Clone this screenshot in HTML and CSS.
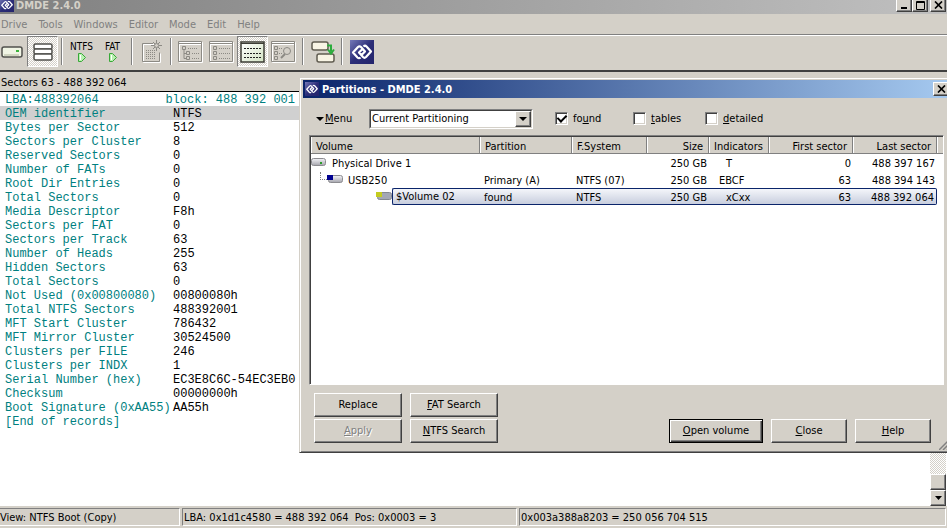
FILE: index.html
```html
<!DOCTYPE html>
<html lang="en">
<head>
    <meta charset="UTF-8">
    <meta name="viewport" content="width=device-width, initial-scale=1.0">
    <title>DMDE 2.4.0</title>
    <link rel="stylesheet" href="styles.css">
</head>
<body>
    <!-- Shared icons -->
    <svg class="defs" width="0" height="0" aria-hidden="true">
        <defs>
            <linearGradient id="logoFill" x1="0" y1="0" x2="1" y2="1">
                <stop offset="0" stop-color="#7478b8"/>
                <stop offset="0.5" stop-color="#2c2e78"/>
                <stop offset="1" stop-color="#24246c"/>
            </linearGradient>
            <linearGradient id="gridFill" x1="0" y1="0" x2="1" y2="1">
                <stop offset="0" stop-color="#ffffff"/>
                <stop offset="1" stop-color="#d4e4c4"/>
            </linearGradient>
            <linearGradient id="driveFill" x1="0" y1="0" x2="0" y2="1">
                <stop offset="0" stop-color="#f4f4f8"/>
                <stop offset="1" stop-color="#a4a4ac"/>
            </linearGradient>
        </defs>
        <symbol id="logo" viewBox="0 0 24 24">
            <rect width="24" height="24" fill="url(#logoFill)"/>
            <path d="M10.500 17.500 Q9 19 7.500 17.500 L3 12.500 L8 7 Q9.500 5.500 11 7 L15 11.500 L11.500 15 M13.500 6.500 Q15 5 16.500 6.500 L21 11.500 L16 17 Q14.500 18.500 13 17 L9 12.500 L12.500 9" fill="none" stroke="#fff" stroke-width="2.200" stroke-linejoin="round"/>
        </symbol>
        <symbol id="play" viewBox="0 0 10 9">
            <path d="M1.500 0.500h3l4 4-4 4h-3z" fill="#b8f0b0" stroke="#38a838"/>
            <path d="M3.500 2v5" stroke="#fff"/>
        </symbol>
        <symbol id="close" viewBox="0 0 9 8">
            <path d="M1 0.500l7 7M8 0.500l-7 7" stroke="#000" stroke-width="1.700"/>
        </symbol>
    </svg>

    <div class="window">
        <header class="titlebar main-title">
            <svg class="title-icon"><use href="#logo"/></svg>
            <h1>DMDE 2.4.0</h1>
            <button class="win-btn" aria-label="Minimize"><svg width="9" height="8"><path d="M1 7h6" stroke="#000" stroke-width="2"/></svg></button>
            <button class="win-btn" aria-label="Maximize"><svg width="9" height="9"><path d="M0.500 0.500h8v8h-8zM0 1.500h9" fill="none" stroke="#000"/></svg></button>
            <button class="win-btn gap" aria-label="Close"><svg width="9" height="8"><use href="#close"/></svg></button>
        </header>

        <nav class="menubar">
            <a href="#">Drive</a>
            <a href="#">Tools</a>
            <a href="#">Windows</a>
            <a href="#">Editor</a>
            <a href="#">Mode</a>
            <a href="#">Edit</a>
            <a href="#">Help</a>
        </nav>

        <div class="toolbar">
            <button class="tool" aria-label="Select drive">
                <svg width="22" height="12"><rect x="1" y="1" width="20" height="10" rx="2" fill="#f0f4e4" stroke="#50504c" stroke-width="1.500"/><path d="M3 9h15" stroke="#d0d4c0" stroke-width="2"/><path d="M15 5h3" stroke="#3cb43c" stroke-width="2"/></svg>
            </button>
            <button class="tool pressed" aria-label="Partitions">
                <svg width="20" height="18"><g fill="#fff" stroke="#50504c" stroke-width="1.500"><rect x="1" y="1" width="18" height="5" rx="1.500"/><rect x="1" y="6" width="18" height="5" rx="1.500"/><rect x="1" y="11" width="18" height="6" rx="1.500"/></g></svg>
            </button>
            <span class="sep"></span>
            <button class="tool search">NTFS<svg width="10" height="9"><use href="#play"/></svg></button>
            <button class="tool search">FAT<svg width="10" height="9"><use href="#play"/></svg></button>
            <span class="sep"></span>
            <button class="tool" aria-label="New" disabled>
                <svg width="22" height="24"><g fill="none" stroke="#fff" transform="translate(1 1)"><path d="M12 3.500H1.500v18h17v-9"/></g><g fill="none" stroke="#8c8a84"><path d="M12 3.500H1.500v18h17v-9"/><path d="M15.500 0v3M15.500 8v3M10 5.500h3M18 5.500h3M12 2l2 2M19 2l-2 2M12 9l2-2M19 9l-2-2"/><circle cx="15.500" cy="5.500" r="2"/><path d="M5 10.500h10M5 12.500h10M5 14.500h10M5 16.500h10M5 18.500h10" stroke-dasharray="1 1"/></g></svg>
            </button>
            <span class="sep"></span>
            <button class="tool" aria-label="Tree view" disabled>
                <svg width="25" height="22"><path d="M1.500 1.500h23v20h-23zM2 3.500h22" fill="none" stroke="#fff"/><g fill="none" stroke="#8c8a84"><path d="M0.500 0.500h23v20h-23zM1 2.500h22"/><path d="M4.500 5.500h3v3h-3zM8.500 10.500h3v3h-3zM8.500 15.500h3v3h-3zM6 9v8.500h2M6 12.500h2"/><path d="M10 7.500h10M14 12.500h7M14 17.500h7" stroke-dasharray="1 1"/></g></svg>
            </button>
            <button class="tool" aria-label="List view" disabled>
                <svg width="25" height="22"><path d="M1.500 1.500h23v20h-23zM2 3.500h22" fill="none" stroke="#fff"/><g fill="none" stroke="#8c8a84"><path d="M0.500 0.500h23v20h-23zM1 2.500h22"/><path d="M4.500 5.500h3v3h-3zM4.500 10.500h3v3h-3zM4.500 15.500h3v3h-3z"/><path d="M10 7.500h11M10 12.500h11M10 17.500h11" stroke-dasharray="1 1"/></g></svg>
            </button>
            <button class="tool pressed" aria-label="Record view">
                <svg width="25" height="22"><rect x="1" y="1" width="23" height="20" fill="url(#gridFill)" stroke="#3c3c34" stroke-width="1.500"/><path d="M1 2.500h23" stroke="#3c3c34"/><path d="M4 7.500h17M4 12.500h17M4 16.500h17" stroke="#202020" stroke-dasharray="2 1"/></svg>
            </button>
            <button class="tool" aria-label="Find" disabled>
                <svg width="25" height="22"><path d="M1.500 1.500h23v20h-23zM2 3.500h22" fill="none" stroke="#fff"/><g fill="none" stroke="#8c8a84"><path d="M0.500 0.500h23v20h-23zM1 2.500h22"/><path d="M3.500 5.500h3v3h-3zM3.500 10.500h3v3h-3zM3.500 15.500h3v3h-3z"/><circle cx="16" cy="10" r="3.500"/><path d="M14 13l-4 4" stroke-width="2"/><path d="M8 7.500h4M8 12.500h3" stroke-dasharray="1 1"/></g></svg>
            </button>
            <span class="sep"></span>
            <button class="tool" aria-label="Copy sectors">
                <svg width="24" height="24"><g fill="#f8f4e4" stroke="#605c50" stroke-width="1.500"><rect x="1" y="2" width="16" height="8" rx="2"/><rect x="6" y="14" width="17" height="8" rx="2"/></g><path d="M16 5.500h4v6M17 9.500l3 4 3-4" fill="none" stroke="#2cac3c" stroke-width="2"/></svg>
            </button>
            <span class="sep"></span>
            <button class="tool" aria-label="About">
                <svg width="24" height="24"><use href="#logo"/></svg>
            </button>
        </div>

        <div class="pane-title">Sectors 63 - 488 392 064</div>

        <main class="editor">
            <div class="records">
                <div class="position"><span>LBA:488392064</span><span>block: 488 392 001</span></div>
                <table>
                    <tr class="current"><th>OEM identifier</th><td>NTFS</td></tr>
                    <tr><th>Bytes per Sector</th><td>512</td></tr>
                    <tr><th>Sectors per Cluster</th><td>8</td></tr>
                    <tr><th>Reserved Sectors</th><td>0</td></tr>
                    <tr><th>Number of FATs</th><td>0</td></tr>
                    <tr><th>Root Dir Entries</th><td>0</td></tr>
                    <tr><th>Total Sectors</th><td>0</td></tr>
                    <tr><th>Media Descriptor</th><td>F8h</td></tr>
                    <tr><th>Sectors per FAT</th><td>0</td></tr>
                    <tr><th>Sectors per Track</th><td>63</td></tr>
                    <tr><th>Number of Heads</th><td>255</td></tr>
                    <tr><th>Hidden Sectors</th><td>63</td></tr>
                    <tr><th>Total Sectors</th><td>0</td></tr>
                    <tr><th>Not Used (0x00800080)</th><td>00800080h</td></tr>
                    <tr><th>Total NTFS Sectors</th><td>488392001</td></tr>
                    <tr><th>MFT Start Cluster</th><td>786432</td></tr>
                    <tr><th>MFT Mirror Cluster</th><td>30524500</td></tr>
                    <tr><th>Clusters per FILE</th><td>246</td></tr>
                    <tr><th>Clusters per INDX</th><td>1</td></tr>
                    <tr><th>Serial Number (hex)</th><td>EC3E8C6C-54EC3EB0</td></tr>
                    <tr><th>Checksum</th><td>00000000h</td></tr>
                    <tr><th>Boot Signature (0xAA55)</th><td>AA55h</td></tr>
                    <tr><th>[End of records]</th><td></td></tr>
                </table>
            </div>
            <div class="scrollbar">
                <div class="thumb"></div>
                <button class="scroll-btn" aria-label="Scroll down"><svg width="7" height="4"><path d="M0 0h7L3.500 4z"/></svg></button>
            </div>
        </main>

        <footer class="statusbar">
            <div class="status-view">View: NTFS Boot (Copy)</div>
            <div class="status-lba">LBA: 0x1d1c4580 = 488 392 064&nbsp; Pos: 0x0003 = 3</div>
            <div class="status-offset">0x003a388a8203 = 250 056 704 515</div>
        </footer>
    </div>

    <section class="dialog" role="dialog" aria-labelledby="dialogTitle">
        <header class="titlebar dialog-title">
            <svg class="title-icon"><use href="#logo"/></svg>
            <h2 id="dialogTitle">Partitions - DMDE 2.4.0</h2>
            <button class="win-btn" aria-label="Close"><svg width="9" height="8"><use href="#close"/></svg></button>
        </header>

        <form class="dialog-body">
            <div class="filters">
                <button type="button" class="menu-btn"><svg width="8" height="4"><path d="M0 0h8L4 4z"/></svg><span><u>M</u>enu</span></button>
                <div class="combo">
                    <select aria-label="Partitioning">
                        <option>Current Partitioning</option>
                    </select>
                    <span class="combo-arrow"><svg width="8" height="4"><path d="M0 0h8L4 4z"/></svg></span>
                </div>
                <label class="check"><input type="checkbox" checked><span>fo<u>u</u>nd</span></label>
                <label class="check"><input type="checkbox"><span><u>t</u>ables</span></label>
                <label class="check"><input type="checkbox"><span><u>d</u>etailed</span></label>
            </div>

            <div class="list">
                <table>
                    <colgroup>
                        <col><col class="c-part"><col class="c-fs"><col class="c-size"><col class="c-ind"><col class="c-sector"><col class="c-sector"><col class="c-rest">
                    </colgroup>
                    <thead>
                        <tr><th>Volume</th><th>Partition</th><th>F.System</th><th class="num">Size</th><th>Indicators</th><th class="num">First sector</th><th class="num">Last sector</th><th></th></tr>
                    </thead>
                    <tbody>
                        <tr>
                            <td class="vol"><div><svg width="16" height="9"><rect x="0.500" y="0.500" width="14" height="7" rx="2" fill="url(#driveFill)" stroke="#8c8c90"/><path d="M9 5h2" stroke="#2c9c2c" stroke-width="2"/></svg><span class="name">Physical Drive 1</span></div></td>
                            <td></td><td></td><td class="num">250 GB</td><td class="ind second">T</td><td class="num">0</td><td class="num">488 397 167</td><td></td>
                        </tr>
                        <tr>
                            <td class="vol level-1"><div><span class="branch"></span><svg width="16" height="9"><rect x="1.500" y="0.500" width="14" height="7" rx="2" fill="url(#driveFill)" stroke="#8c8c90"/><rect width="6" height="5" fill="#000090"/></svg><span class="name">USB250</span></div></td>
                            <td>Primary (A)</td><td>NTFS (07)</td><td class="num">250 GB</td><td class="ind">EBCF</td><td class="num">63</td><td class="num">488 394 143</td><td></td>
                        </tr>
                        <tr class="selected">
                            <td class="vol level-2"><div><svg width="16" height="9"><rect x="1.500" y="0.500" width="14" height="7" rx="2" fill="#a4a8b4" stroke="#848890"/><rect width="6" height="5" fill="#c4cc20"/></svg><span class="name">$Volume 02</span></div></td>
                            <td>found</td><td>NTFS</td><td class="num">250 GB</td><td class="ind second">xCxx</td><td class="num">63</td><td class="num">488 392 064</td><td></td>
                        </tr>
                    </tbody>
                </table>
            </div>

            <div class="actions">
                <div class="search-actions">
                    <button type="button">Replace</button>
                    <button type="button"><u>F</u>AT Search</button>
                    <button type="button" disabled><u>A</u>pply</button>
                    <button type="button"><u>N</u>TFS Search</button>
                </div>
                <div class="main-actions">
                    <button type="button" class="default"><u>O</u>pen volume</button>
                    <button type="button"><u>C</u>lose</button>
                    <button type="button"><u>H</u>elp</button>
                </div>
            </div>
        </form>
        <svg class="grip" width="12" height="12"><path d="M0 12L12 0M4 12l8-8M8 12l4-4" stroke="#808080" stroke-width="1.500"/></svg>
    </section>
</body>
</html>
```
FILE: styles.css
```css
* {
    box-sizing: border-box;
}
body {
    margin: 0;
    position: relative;
    overflow: hidden;
    background-color: #d4d0c8;
    color: #000;
    font-family: "DejaVu Sans Condensed", "Noto Sans", sans-serif;
    font-size: 11px;
    line-height: 14px;
}
button, select, input {
    margin: 0;
    padding: 0;
    font: inherit;
    color: inherit;
}
button {
    background-color: #d4d0c8;
    border: none;
}
svg {
    display: block;
    flex: none;
}
table {
    border-collapse: collapse;
    border-spacing: 0;
}
th {
    font-weight: normal;
    text-align: left;
}
.defs {
    position: absolute;
}

/* Main window */
.window {
    display: flex;
    flex-direction: column;
    height: 100vh;
}
.titlebar {
    display: flex;
    align-items: center;
    color: #fff;
}
.titlebar h1,
.titlebar h2 {
    flex: 1;
    margin: 0;
    font-size: 11px;
    font-weight: bold;
}
.title-icon {
    width: 14px;
    height: 14px;
    margin-right: 2px;
}
.main-title {
    height: 14px;
    align-items: flex-end;
    overflow: hidden;
    padding: 0 1px 2px 0;
    background: linear-gradient(to right, #808080, #c0c0c0);
    color: #d4d0c8;
}
.main-title h1 {
    align-self: flex-start;
    line-height: 11px;
}
.win-btn {
    display: flex;
    align-items: center;
    justify-content: center;
    width: 16px;
    height: 14px;
    border: 1px solid;
    border-color: #fff #404040 #404040 #fff;
    box-shadow: inset -1px -1px #808080;
}
.win-btn.gap {
    margin-left: 2px;
}
.menubar {
    display: flex;
    align-items: center;
    gap: 11px;
    height: 20px;
    padding: 1px 0 0 1px;
}
.menubar a {
    color: #808080;
    text-decoration: none;
}
.toolbar {
    display: flex;
    height: 38px;
    margin-left: -4px;
    padding-top: 1px;
    border-top: 1px solid #808080;
    border-bottom: 2px solid #404040;
    box-shadow: inset 0 1px #fff;
}
.tool {
    display: flex;
    flex-direction: column;
    align-items: center;
    justify-content: center;
    width: 31px;
    height: 31px;
    background: none;
}
.tool.pressed {
    border: 1px solid;
    border-color: #808080 #fff #fff #808080;
    background: repeating-conic-gradient(#fff 0 25%, #d4d0c8 0 50%) 0 0 / 2px 2px;
}
.tool.search {
    font-size: 10px;
    line-height: 12px;
}
.sep {
    width: 2px;
    height: 27px;
    margin: 2px 3px;
    border-left: 1px solid #808080;
    border-right: 1px solid #fff;
}
.pane-title {
    height: 20px;
    padding: 4px 1px 0;
    border-bottom: 1px solid #000;
}
.editor {
    display: flex;
    flex: 1;
    min-height: 0;
    padding-right: 1px;
    background-color: #fff;
    font-family: "Liberation Mono", monospace;
    font-size: 12px;
    line-height: 12px;
}
.records {
    flex: 1;
    overflow: hidden;
}
.position {
    display: flex;
    justify-content: space-between;
    width: 299px;
    padding: 2px 4px 0 5px;
    color: #008080;
}
.records table {
    width: 299px;
}
.records th {
    width: 173px;
    padding: 2px 0 0 5px;
    color: #008080;
    white-space: nowrap;
}
.records td {
    padding: 2px 0 0;
}
.current {
    background-color: #d0d0d0;
}
.scrollbar {
    display: flex;
    flex-direction: column;
    justify-content: flex-end;
    width: 16px;
    background: repeating-conic-gradient(#fff 0 25%, #d4d0c8 0 50%) 0 0 / 2px 2px;
}
.thumb,
.scroll-btn {
    display: flex;
    align-items: center;
    justify-content: center;
    height: 16px;
    background-color: #d4d0c8;
    border: 1px solid;
    border-color: #fff #404040 #404040 #fff;
    box-shadow: inset -1px -1px #808080;
}
.statusbar {
    display: flex;
    gap: 2px;
    height: 22px;
    padding: 2px 1px 2px 0;
}
.statusbar div {
    padding: 2px 0 0 1px;
    border: 1px solid;
    border-color: #808080 #fff #fff #808080;
    white-space: nowrap;
}
.statusbar .status-view {
    width: 180px;
    padding-left: 0;
    border-left: none;
}
.status-lba {
    width: 335px;
}
.status-offset {
    flex: 1;
}

/* Partitions dialog */
.dialog {
    position: absolute;
    top: 77px;
    left: 299px;
    right: -8px;
    padding: 2px 3px 9px 3px;
    background-color: #d4d0c8;
    border: 1px solid;
    border-color: #d4d0c8 #404040 #404040 #d4d0c8;
    box-shadow: inset 1px 1px #fff, inset -1px -1px #808080;
}
.dialog-title {
    height: 18px;
    padding: 0 2px;
    background: linear-gradient(to right, #0a246a, #a6caf0);
}
.dialog-title h2 {
    padding: 1px 0 0 1px;
}
.dialog-title .win-btn {
    color: #000;
}
.dialog-body {
    padding: 10px 7px 0 6px;
}
.filters {
    display: flex;
    align-items: center;
    height: 21px;
    padding-left: 7px;
}
.menu-btn {
    display: flex;
    align-items: center;
    gap: 1px;
    width: 53px;
    background: none;
}
.combo {
    position: relative;
    width: 164px;
    height: 20px;
    margin-right: 22px;
    border: 1px solid;
    border-color: #808080 #fff #fff #808080;
}
.combo select {
    display: block;
    width: 100%;
    height: 100%;
    padding: 1px 0 0 1px;
    appearance: none;
    background-color: #fff;
    border: 1px solid;
    border-color: #404040 #d4d0c8 #d4d0c8 #404040;
    border-radius: 0;
}
.combo-arrow {
    position: absolute;
    top: 1px;
    right: 1px;
    bottom: 1px;
    display: flex;
    align-items: center;
    justify-content: center;
    width: 16px;
    background-color: #d4d0c8;
    border: 1px solid;
    border-color: #fff #404040 #404040 #fff;
    box-shadow: inset -1px -1px #808080;
    pointer-events: none;
}
.check {
    display: flex;
    align-items: center;
    gap: 5px;
    width: 78px;
}
.check + .check {
    width: 72px;
}
.check span,
.menu-btn span {
    padding-top: 1px;
}
.check input {
    display: grid;
    place-items: center;
    width: 13px;
    height: 13px;
    appearance: none;
    background-color: #fff;
    border: 1px solid;
    border-color: #808080 #fff #fff #808080;
    box-shadow: inset 1px 1px #404040, inset -1px -1px #d4d0c8;
}
.check input:checked::before {
    content: "";
    width: 4px;
    height: 7px;
    margin-bottom: 2px;
    border: solid #000;
    border-width: 0 2px 2px 0;
    transform: rotate(45deg);
}
.list {
    height: 250px;
    margin-top: 6px;
    background-color: #fff;
    border: 1px solid;
    border-color: #808080 #fff #fff #808080;
    box-shadow: inset 1px 1px #404040;
    padding: 1px 0 0 1px;
}
.list table {
    width: 100%;
    table-layout: fixed;
    border-collapse: separate;
    line-height: 13px;
}
.c-part {
    width: 92px;
}
.c-fs {
    width: 75px;
}
.c-size {
    width: 62px;
}
.c-ind {
    width: 60px;
}
.c-sector {
    width: 84px;
}
.c-rest {
    width: 6px;
}
.list th {
    height: 17px;
    padding: 2px 5px 0;
    background-color: #d4d0c8;
    border-right: 1px solid #808080;
    border-bottom: 1px solid #808080;
    box-shadow: inset 1px 0 #fff;
}
.list th:last-child {
    padding: 0;
    border-right: none;
}
.list td {
    height: 17px;
    padding: 2px 2px 0 4px;
    white-space: nowrap;
}
.list .num {
    text-align: right;
}
.list .ind {
    padding-left: 10px;
}
.list .second {
    padding-left: 17px;
}
.list .vol {
    padding: 0;
}
.vol div {
    display: flex;
    align-items: center;
    height: 17px;
}
.vol .name {
    padding: 2px 0 0 5px;
}
.level-1 div {
    padding-left: 9px;
}
.branch {
    width: 7px;
    height: 8px;
    margin-bottom: 8px;
    border-left: 1px dotted #808080;
    border-bottom: 1px dotted #808080;
}
.level-2 div {
    padding-left: 65px;
}
.selected td:not(:first-child):not(:last-child),
.selected .name {
    padding-top: 1px;
    background: linear-gradient(to bottom, #f4f6fa, #c8cede);
    border-top: 1px solid #0a246a;
    border-bottom: 1px solid #0a246a;
}
.selected td:nth-last-child(2) {
    border-right: 1px solid #0a246a;
    border-radius: 0 2px 2px 0;
}
.selected .name {
    flex: 1;
    height: 17px;
    padding-left: 3px;
    border-left: 1px solid #0a246a;
    border-radius: 2px 0 0 2px;
}
.actions {
    display: flex;
    justify-content: space-between;
    align-items: flex-end;
    padding: 8px 13px 0 5px;
}
.search-actions {
    display: grid;
    grid-template-columns: 88px 88px;
    gap: 2px 8px;
}
.main-actions {
    display: flex;
    gap: 8px;
}
.actions button {
    min-width: 76px;
    height: 24px;
    border: 1px solid;
    border-color: #fff #404040 #404040 #fff;
    box-shadow: inset -1px -1px #808080;
}
.actions button:disabled {
    color: #808080;
    text-shadow: 1px 1px #fff;
}
.actions .default {
    width: 94px;
    border-color: #000;
    box-shadow: inset 1px 1px #fff, inset -1px -1px #404040, inset -2px -2px #808080;
}
.grip {
    position: absolute;
    right: 3px;
    bottom: 2px;
}
```
